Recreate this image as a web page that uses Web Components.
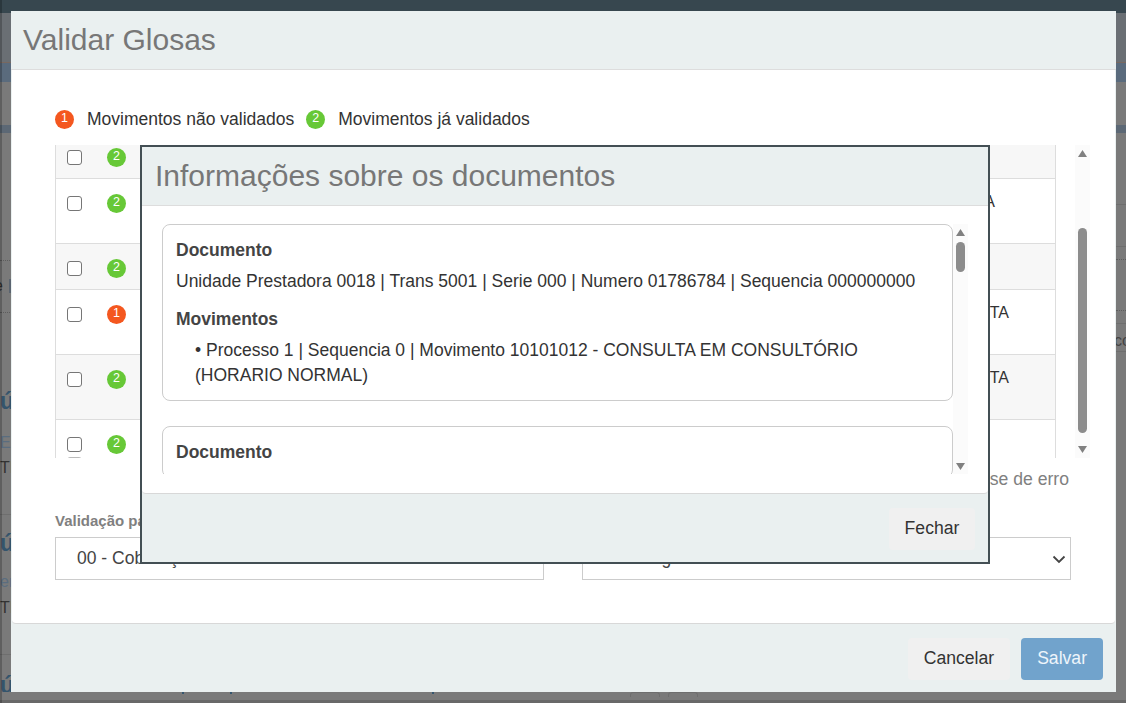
<!DOCTYPE html>
<html lang="pt-BR">
<head>
<meta charset="utf-8">
<title>Validar Glosas</title>
<style>
html,body{margin:0;padding:0;width:1126px;height:703px;overflow:hidden;background:#f5f5f5;font-family:"Liberation Sans",Arial,sans-serif;font-size:17.5px;color:#333}
</style>
</head>
<body>
<template id="t-page">
<style>
:host{display:block;width:1126px;height:703px;overflow:hidden;position:relative;background:#f5f5f5;font-family:"Liberation Sans",sans-serif}
:host::after{content:"";position:absolute;inset:0;background:rgba(0,0,0,.5)}
:host::before{content:"";position:absolute;left:0;top:0;bottom:0;width:2px;background:rgba(0,0,0,.22);z-index:1}
.top{height:13px;background:#6e8e9e}
.a{height:49px;background:#d4dee9}
.l{height:1px;background:#f0d0c0}
.b{height:19px;background:#b4d6fa}
.c{height:43px}
.d{height:8px;background:#b8d0ea}
.main{display:flex;justify-content:space-between;height:559px}
.col{width:12px;overflow:hidden;white-space:nowrap}
.col.r{width:10px}
.s{display:block}
.dot{border-bottom:1px dotted #bbb}
.rule{border-bottom:1px solid #ddd}
.u{font-size:23px;font-weight:700;color:#68a8d8;line-height:30px}
.t{font-size:16px;line-height:20px}
.blue{color:#b4daff}.dark{color:#666}.co{color:#888;font-size:16px;line-height:20px}
.bar{display:inline-block;width:2px;height:14px;background:#b4c8e0;vertical-align:-2px;margin-left:2px}
.bot{display:flex;height:8px;position:relative}
.bot i{display:block;background:#68acde;height:2px;width:2px}
.bot b{display:block;height:5px;border:1px solid #ddd;border-bottom:0;border-radius:3px 3px 0 0;box-sizing:border-box;width:30px}
.end{height:3px;background:#d0d0d0}
</style>
<div class="top"></div><div class="a"></div><div class="l"></div><div class="b"></div><div class="c"></div><div class="d"></div>
<div class="main">
<div class="col">
<span class="s dot" style="height:127px"></span>
<span class="s dot t dark" style="height:51px"><span class="s" style="height:15px"></span><span style="margin-left:-6px">e</span> <span class="bar"></span></span>
<span class="s" style="height:73px"></span>
<span class="s u">ú</span>
<span class="s" style="height:17px"></span>
<span class="s t blue">EA</span>
<span class="s" style="height:5px"></span>
<span class="s t dark">TI</span>
<span class="s rule" style="height:36px"></span>
<span class="s" style="height:13px"></span>
<span class="s u">ú</span>
<span class="s" style="height:14px"></span>
<span class="s t blue">er</span>
<span class="s" style="height:6px"></span>
<span class="s t dark">TI</span>
<span class="s rule" style="height:36px"></span>
<span class="s" style="height:15px"></span>
<span class="s u">ú</span>
</div>
<div class="col r">
<span class="s rule" style="height:71px"></span>
<span class="s rule" style="height:41px"></span>
<span class="s dot" style="height:12px"></span>
<span class="s dot" style="height:50px"></span>
<span class="s rule" style="height:12px"></span>
<span class="s" style="height:7px"></span>
<span class="s co" style="margin-left:-2px">co</span>
<span class="s rule" style="height:0"></span>
</div>
</div>
<div class="bot">
<i style="margin-left:182px"></i><i style="margin-left:46px"></i><i style="margin-left:200px"></i>
<b style="margin-left:196px"></b><b style="margin-left:8px"></b>
</div>
<div class="end"></div>
</template>

<template id="t-modal">
<style>
:host{display:grid;grid-template-rows:59px 1fr 68px;position:absolute;left:var(--x);top:var(--y);width:var(--w);height:var(--h);box-sizing:border-box;background:#eaf0f0;border:var(--b,0) solid #434f54;font-family:"Liberation Sans",sans-serif;z-index:var(--z,2)}
header{display:flex;align-items:center;padding-left:var(--tp,12px);font-size:30px;color:#777;border-bottom:1px solid #ddd}
main{background:#fff;margin:0 var(--bm,1px);border-bottom:1px solid #d8d8d8;border-radius:0 0 4px 4px;min-height:0;overflow:hidden}
footer{display:flex;justify-content:flex-end;align-items:center;gap:11px;padding:2px 13px 0 0}
</style>
<header><slot name="title"></slot></header>
<main><slot></slot></main>
<footer><slot name="footer"></slot></footer>
</template>

<template id="t-badge">
<style>
:host{display:flex;align-items:flex-start;justify-content:center;width:19px;height:19px;border-radius:50%;background:#67c837;color:#fff;font:12.5px/17px "Liberation Sans",sans-serif;flex:none}
:host([kind="1"]){background:#f4571f}
</style><slot></slot>
</template>

<template id="t-row">
<style>
:host{display:flex;box-sizing:border-box;height:65px;padding-top:17px;background:#fff;border-bottom:1px solid #ddd;position:relative}
:host([alt]){background:#f7f7f7}
.c{width:51px;padding-left:11px;box-sizing:border-box;flex:none;display:flex;flex-direction:column;gap:5px}
.box{display:block;width:15px;height:15px;box-sizing:border-box;border:1.5px solid #767676;border-radius:3px;background:#fff;flex:none}
.bd{display:flex;height:19px;margin-top:-2px}
.txt{flex:1;text-align:right;font-size:16px;line-height:20px;color:#333;padding-right:var(--tr,46px);margin-top:-4px}
</style>
<div class="c"><span class="box"></span><slot name="extra"></slot></div>
<div class="bd"><slot name="badge"></slot></div>
<div class="txt"><slot></slot></div>
</template>

<template id="t-scroll">
<style>
:host{display:flex;flex-direction:column;align-items:center;box-sizing:border-box;width:15px;height:var(--sh);padding-top:5px;background:#fbfbfb;flex:none}
svg{display:block;flex:none}
.thumb{width:9px;height:var(--th);margin:var(--to) 0 var(--tb);border-radius:5px;background:#8c8c8c;flex:none}
</style>
<svg width="9" height="7" viewBox="0 0 9 7"><path d="M4.5 0 L9 7 H0 Z" fill="#808080"/></svg>
<div class="thumb"></div>
<svg width="9" height="7" viewBox="0 0 9 7"><path d="M0 0 H9 L4.5 7 Z" fill="#808080"/></svg>
</template>

<template id="t-card">
<style>
:host{display:block;box-sizing:border-box;width:791px;padding:13px 13px 12px;border:1px solid #ccc;border-radius:8px;background:#fff;margin-bottom:25px;font:17.5px/25px "Liberation Sans",sans-serif;color:#333}
</style><slot></slot>
</template>

<template id="t-btn">
<style>
:host{display:inline-flex;align-items:center;justify-content:center;height:42px;padding:0 16px 2px;box-sizing:border-box;border-radius:4px;background:#f0f0f0;color:#333;font:17.6px "Liberation Sans",sans-serif;flex:none}
:host([primary]){background:#71a3cc;color:#eef5fb}
:host([narrow]){padding:0 0 2px;width:86px}
</style><slot></slot>
</template>

<template id="t-select">
<style>
:host{display:flex;align-items:center;justify-content:space-between;height:43px;box-sizing:border-box;border:1px solid #ccc;padding:0 3px 0 21px;background:#fff;font:17.5px "Liberation Sans",sans-serif;color:#444}
svg{display:block}
</style><span><slot></slot></span>
<svg width="16" height="16" viewBox="0 0 16 16"><path d="M2.5 5.5 L8 11 L13.5 5.5" fill="none" stroke="#444" stroke-width="1.8"/></svg>
</template>

<template id="t-glosas">
<style>
:host{display:block;padding-left:43px;box-sizing:border-box;height:100%;color:#333;font-family:"Liberation Sans",sans-serif}
.legend{display:flex;align-items:center;height:19px;margin-top:40px;font-size:17.5px;color:#333}
.legend x-badge{margin-right:13px}
.legend span{margin-right:12px}
.tw{display:flex;margin-top:16px;height:313px}
.table{width:1001px;height:313px;overflow:hidden;box-sizing:border-box;border-left:1px solid #ddd;border-right:1px solid #ddd;flex:none}
x-scrollbar{margin-left:19px;--sh:313px;--th:205px;--to:71px;--tb:13px}
.link{text-align:right;width:1014px;margin-top:11px;height:20px;line-height:20px;font-size:17.6px;color:#808080}
.lab{margin-top:22px;height:20px;line-height:20px;font-size:15px;font-weight:700;color:#808080;margin-bottom:6px}
.grid{display:grid;grid-template-columns:489px 489px;column-gap:38px}
</style>
<div class="legend"><x-badge kind="1">1</x-badge><span>Movimentos não validados</span><x-badge>2</x-badge><span>Movimentos já validados</span></div>
<div class="tw">
<div class="table">
<x-row alt style="height:34px;padding-top:5px"><x-badge slot="badge">2</x-badge></x-row>
<x-row style="--tr:60px"><x-badge slot="badge">2</x-badge>A</x-row>
<x-row alt style="height:46px"><x-badge slot="badge">2</x-badge></x-row>
<x-row><x-badge slot="badge" kind="1">1</x-badge>TA</x-row>
<x-row alt><x-badge slot="badge">2</x-badge>TA</x-row>
<x-row><x-badge slot="badge">2</x-badge><x-tick slot="extra"></x-tick></x-row>
</div>
<x-scrollbar></x-scrollbar>
</div>
<div class="link">Análise de erro</div>
<div class="lab">Validação para</div>
<div class="grid"><x-select>00 - Cobrança</x-select><x-select>00 - Regra</x-select></div>
</template>

<template id="t-tick">
<style>:host{display:block;width:15px;height:15px;box-sizing:border-box;border:1.5px solid #bbb;border-radius:3px;background:#fff}</style>
</template>

<template id="t-docs">
<style>
:host{display:flex;align-items:flex-start;margin:18px 0 0 20px;height:250px;overflow:hidden;font-family:"Liberation Sans",sans-serif}
.list{width:791px;height:250px;overflow:hidden;flex:none}
x-scrollbar{--sh:250px;--th:30px;--to:6px;--tb:191px}
b{display:block;color:#444}
p{margin:6px 0 13px}
.mv{padding-left:19px;margin-top:6px}
</style>
<div class="list">
<x-card>
<b>Documento</b>
<p>Unidade Prestadora 0018 | Trans 5001 | Serie 000 | Numero 01786784 | Sequencia 000000000</p>
<b>Movimentos</b>
<div class="mv">• Processo 1 | Sequencia 0 | Movimento 10101012 - CONSULTA EM CONSULTÓRIO (HORARIO NORMAL)</div>
</x-card>
<x-card><b>Documento</b></x-card>
</div>
<x-scrollbar></x-scrollbar>
</template>

<x-page></x-page>

<x-modal style="--x:11px;--y:11px;--w:1105px;--h:681px;--z:2">
<span slot="title">Validar Glosas</span>
<x-glosas></x-glosas>
<x-btn slot="footer">Cancelar</x-btn>
<x-btn slot="footer" primary>Salvar</x-btn>
</x-modal>

<x-modal style="--x:140px;--y:145px;--w:850px;--h:419px;--z:3;--b:2px;--bm:0px;--tp:13px">
<span slot="title">Informações sobre os documentos</span>
<x-docs></x-docs>
<x-btn slot="footer" narrow>Fechar</x-btn>
</x-modal>

<script>
const names={'x-page':'t-page','x-modal':'t-modal','x-badge':'t-badge','x-row':'t-row','x-scrollbar':'t-scroll','x-card':'t-card','x-btn':'t-btn','x-select':'t-select','x-glosas':'t-glosas','x-tick':'t-tick','x-docs':'t-docs'};
for(const [name,id] of Object.entries(names)){
  customElements.define(name,class extends HTMLElement{
    constructor(){super();this.attachShadow({mode:'open'}).appendChild(document.getElementById(id).content.cloneNode(true));}
  });
}
</script>
</body>
</html>
